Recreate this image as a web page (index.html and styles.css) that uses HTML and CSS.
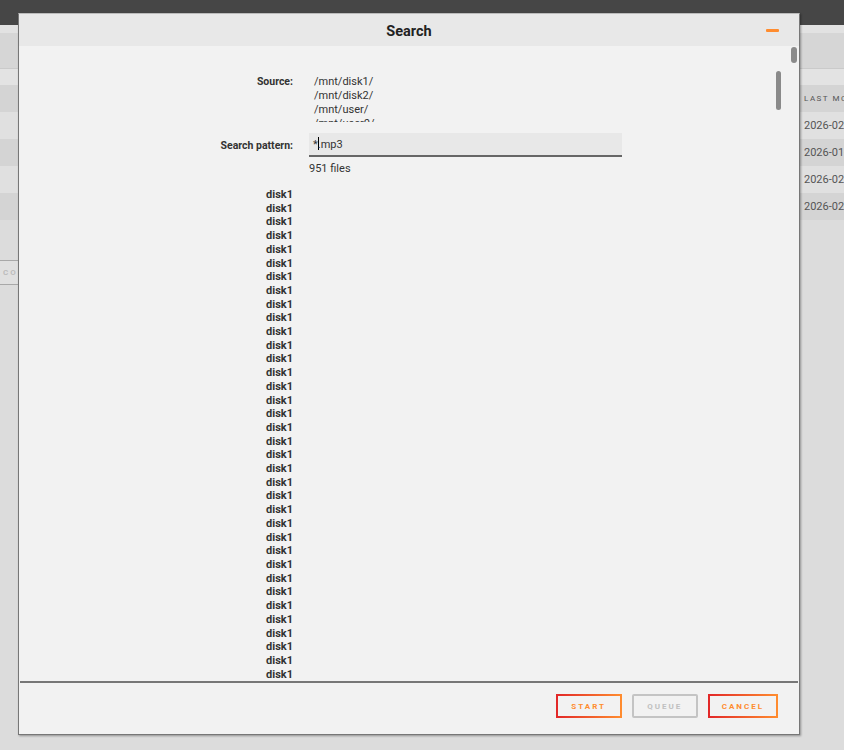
FILE: index.html
```html
<!DOCTYPE html>
<html lang="en">
<head>
    <meta charset="UTF-8">
    <meta name="viewport" content="width=device-width, initial-scale=1.0">
    <title>Search</title>
    <link rel="stylesheet" href="styles.css">
</head>
<body>
    <div class="topbar"></div>

    <div class="page">
        <div class="band-light"></div>
        <div class="band-dark"></div>
        <div class="band-sub"></div>
        <div class="table">
            <div class="row head"><span class="cell">LAST MODIFIED</span></div>
            <div class="row"><span class="cell">2026-02-11</span></div>
            <div class="row"><span class="cell">2026-01-27</span></div>
            <div class="row"><span class="cell">2026-02-03</span></div>
            <div class="row"><span class="cell">2026-02-09</span></div>
        </div>
        <div class="actions">
            <button class="ghost">COMPUTE</button>
        </div>
    </div>

    <div class="modal">
        <div class="modal-title">
            Search
            <span class="minimize"></span>
        </div>

        <div class="modal-body">
            <span class="scroll-thumb"></span>
            <div class="form-row">
                <div class="label">Source:</div>
                <div class="value">
                    <div class="source-box">
                        <div>/mnt/disk1/</div>
                        <div>/mnt/disk2/</div>
                        <div>/mnt/user/</div>
                        <div>/mnt/user0/</div>
                        <span class="source-thumb"></span>
                    </div>
                </div>
            </div>
            <div class="form-row pattern">
                <div class="label">Search pattern:</div>
                <div class="value">
                    <div class="input">*<span class="caret"></span>.mp3</div>
                    <div class="count">951 files</div>
                </div>
            </div>
            <div class="results">
                <div>disk1</div><div>disk1</div><div>disk1</div><div>disk1</div>
                <div>disk1</div><div>disk1</div><div>disk1</div><div>disk1</div>
                <div>disk1</div><div>disk1</div><div>disk1</div><div>disk1</div>
                <div>disk1</div><div>disk1</div><div>disk1</div><div>disk1</div>
                <div>disk1</div><div>disk1</div><div>disk1</div><div>disk1</div>
                <div>disk1</div><div>disk1</div><div>disk1</div><div>disk1</div>
                <div>disk1</div><div>disk1</div><div>disk1</div><div>disk1</div>
                <div>disk1</div><div>disk1</div><div>disk1</div><div>disk1</div>
                <div>disk1</div><div>disk1</div><div>disk1</div><div>disk1</div>
                <div>disk1</div><div>disk1</div>
            </div>
        </div>

        <div class="modal-footer">
            <button class="btn">START</button>
            <button class="btn disabled">QUEUE</button>
            <button class="btn">CANCEL</button>
        </div>
    </div>
</body>
</html>
```

FILE: styles.css
```css
* {
    margin: 0;
    padding: 0;
    box-sizing: border-box;
}

body {
    font-family: Roboto, "Liberation Sans", sans-serif;
    background: #dcdcdc;
    width: 844px;
    height: 750px;
    overflow: hidden;
    color: #333;
}

.topbar {
    height: 25px;
    background: #464646;
}

/* page behind the dialog */
.band-light {
    height: 8px;
    background: #e2e2e2;
}

.band-dark {
    height: 36px;
    background: #d6d6d6;
    border-bottom: 1px solid #cacaca;
}

.band-sub {
    height: 16px;
    background: #e3e3e3;
}

.row {
    height: 27px;
    display: flex;
    justify-content: flex-end;
    align-items: center;
    background: #e0e0e0;
}

.row:nth-child(odd) {
    background: #d4d4d4;
}

.cell {
    width: 40px;
    white-space: nowrap;
    overflow: hidden;
    font-size: 11px;
    color: #555;
}

.row.head .cell {
    font-size: 8px;
    letter-spacing: 1.5px;
    color: #555;
}

.actions {
    margin-top: 40px;
}

.ghost {
    font-family: inherit;
    font-size: 8px;
    font-weight: 600;
    letter-spacing: 2px;
    color: #bbb;
    background: #e0e0e0;
    border: 1px solid #a8a8a8;
    border-left: none;
    height: 25px;
    padding: 0 12px 0 3px;
}

/* dialog */
.modal {
    position: absolute;
    left: 18px;
    top: 13px;
    width: 782px;
    height: 722px;
    display: flex;
    flex-direction: column;
    background: #f2f2f2;
    border: 1px solid #777;
    border-top-color: #bbb;
    box-shadow: 1px 1px 2px rgba(0, 0, 0, 0.35);
}

.modal-title {
    position: relative;
    height: 32px;
    line-height: 36px;
    background: #e8e8e8;
    text-align: center;
    font-size: 14.5px;
    font-weight: 700;
    color: #222;
}

.minimize {
    position: absolute;
    right: 20px;
    top: 15px;
    width: 13px;
    height: 3px;
    border-radius: 1px;
    background: #ff8c2f;
}

.modal-body {
    position: relative;
    flex: 1;
    overflow: hidden;
    padding-top: 25px;
    margin-bottom: 3px;
}

.scroll-thumb {
    position: absolute;
    right: 2px;
    top: 1px;
    width: 6px;
    height: 16px;
    border-radius: 3px;
    background: #8a8a8a;
}

.form-row {
    display: flex;
    gap: 16px;
}

.label {
    width: 274px;
    flex-shrink: 0;
    text-align: right;
    font-size: 10.5px;
    font-weight: 700;
    color: #333;
    line-height: 14px;
    padding-top: 4px;
}

.value {
    flex: 1;
    padding-right: 16px;
}

.source-box {
    position: relative;
    height: 51px;
    overflow: hidden;
    padding: 4px 0 0 5px;
    font-size: 11px;
    line-height: 14px;
    color: #333;
}

.source-thumb {
    position: absolute;
    right: 2px;
    top: 0;
    width: 5px;
    height: 39px;
    border-radius: 3px;
    background: #8a8a8a;
}

.pattern {
    margin-top: 11px;
}

.pattern .label {
    padding-top: 6px;
}

.input {
    width: 313px;
    height: 24px;
    background: #e8e8e8;
    border-bottom: 2px solid #666;
    padding-left: 4px;
    font-size: 11px;
    line-height: 24px;
    color: #333;
}

.caret {
    display: inline-block;
    width: 1px;
    height: 13px;
    margin-right: -1px;
    background: #000;
    vertical-align: -2px;
}

.count {
    font-size: 11px;
    line-height: 14px;
    margin-top: 5px;
    color: #333;
}

.results {
    width: 274px;
    text-align: right;
    margin-top: 12px;
    font-size: 11px;
    font-weight: 700;
    line-height: 13.7px;
    color: #333;
}

.modal-footer {
    border-top: 2px solid #777;
    margin: 0 1px;
    height: 53px;
    display: flex;
    justify-content: flex-end;
    align-items: flex-start;
    gap: 10px;
    padding: 11px 20px 0 0;
}

.btn {
    font-family: inherit;
    height: 24px;
    min-width: 66px;
    padding: 0 12px;
    background: #f2f2f2;
    border: 2px solid;
    border-image: linear-gradient(90deg, #e22828, #ff8c2f) 1;
    color: #ff8c2f;
    font-size: 8px;
    font-weight: 700;
    letter-spacing: 2px;
}

.btn.disabled {
    border-image: none;
    border-color: #c4c4c4;
    border-radius: 2px;
    color: #c0c0c0;
}
```
